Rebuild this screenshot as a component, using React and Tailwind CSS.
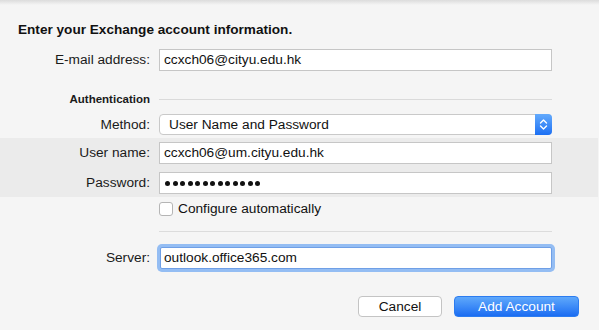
import React from "react";

const FONT = { fontFamily: '"Liberation Sans", Arial, sans-serif' };

function Label({ children }) {
  return (
    <div className="w-[150px] shrink-0 text-right text-[13.7px] text-[#1a1a1a] leading-none pr-0">
      {children}
    </div>
  );
}

function TextBox({ value }) {
  return (
    <div className="w-[393px] h-[22px] bg-white flex items-center pl-[4px] text-[13.7px] text-[#111] leading-none border border-[#c6c6c6]">
      {value}
    </div>
  );
}

export default function App() {
  return (
    <div
      className="w-[599px] h-[330px] bg-[#f5f5f5] relative overflow-hidden flex flex-col"
      style={FONT}
    >
      <div className="absolute top-0 left-0 right-0 h-[5px] bg-gradient-to-b from-[#dcdcdc] to-[#f5f5f5]" />
      <div className="mt-[23px] pl-[18px] text-[13.6px] font-bold text-[#111] leading-[14px] h-[14px]">
        Enter your Exchange account information.
      </div>

      <div className="mt-[12px] flex items-center gap-[9px]">
        <Label>E-mail address:</Label>
        <TextBox value="ccxch06@cityu.edu.hk" />
      </div>

      <div className="mt-[22px] flex items-center gap-[9px] h-[13px]">
        <div className="w-[150px] shrink-0 text-right text-[11.5px] font-bold text-[#1a1a1a] leading-none">
          Authentication
        </div>
        <div className="w-[393px] h-px bg-[#dadada]" />
      </div>

      <div className="mt-[8px] flex items-center gap-[9px]">
        <Label>Method:</Label>
        <div className="w-[393px] h-[21px] bg-white border border-[#c9c9c9] rounded-[4px] flex items-center relative">
          <span className="pl-[9px] text-[13.7px] text-[#111] leading-none">
            User Name and Password
          </span>
          <div className="absolute right-[-1px] top-[-1px] bottom-[-1px] w-[17px] rounded-r-[4px] bg-gradient-to-b from-[#63aafc] to-[#1b6ff3] flex items-center justify-center">
            <svg width="9" height="13" viewBox="0 0 9 13" fill="none">
              <path d="M1.5 5 L4.5 2 L7.5 5" stroke="white" strokeWidth="1.4" strokeLinecap="round" strokeLinejoin="round" />
              <path d="M1.5 8 L4.5 11 L7.5 8" stroke="white" strokeWidth="1.4" strokeLinecap="round" strokeLinejoin="round" />
            </svg>
          </div>
        </div>
      </div>

      <div className="mt-[3px] w-[598px] bg-[#ebebeb] pt-[4px] pb-[3px] flex flex-col gap-[8px]">
        <div className="flex items-center gap-[9px]">
          <Label>User name:</Label>
          <TextBox value="ccxch06@um.cityu.edu.hk" />
        </div>
        <div className="flex items-center gap-[9px]">
          <Label>Password:</Label>
          <div className="w-[393px] h-[22px] bg-white border border-[#c6c6c6] flex items-center pl-[5px] gap-[2.5px]">
            {Array.from({ length: 13 }).map((_, i) => (
              <span key={i} className="w-[5px] h-[5px] rounded-full bg-[#111] block" />
            ))}
          </div>
        </div>
      </div>

      <div className="mt-[5px] flex items-center pl-[159px] gap-[5px]">
        <div className="w-[14px] h-[14px] bg-white border border-[#b5b5b5] rounded-[3px]" />
        <span className="text-[13.7px] text-[#111] leading-none">Configure automatically</span>
      </div>

      <div className="mt-[15px] ml-[159px] w-[393px] h-px bg-[#dcdcdc]" />

      <div className="mt-[15px] flex items-center gap-[9px]">
        <Label>Server:</Label>
        <div className="pl-[1px]">
          <div className="w-[392px] h-[22px] bg-white flex items-center pl-[3px] text-[13.7px] text-[#111] leading-none border border-[#6f9fe6] rounded-[2px] shadow-[0_0_0_3px_#94bdf3]">
            outlook.office365.com
          </div>
        </div>
      </div>

      <div className="mt-[27px] flex justify-end gap-[12px] pr-[20px]">
        <div className="w-[84px] h-[21px] bg-white border border-[#c4c4c4] rounded-[4px] flex items-center justify-center text-[13.7px] text-[#111] leading-none">
          Cancel
        </div>
        <div className="w-[125px] h-[21px] rounded-[4px] bg-gradient-to-b from-[#5fa8fb] to-[#1a6cf2] border border-[#2c7cf0] flex items-center justify-center text-[13.7px] text-white leading-none">
          Add Account
        </div>
      </div>
    </div>
  );
}
